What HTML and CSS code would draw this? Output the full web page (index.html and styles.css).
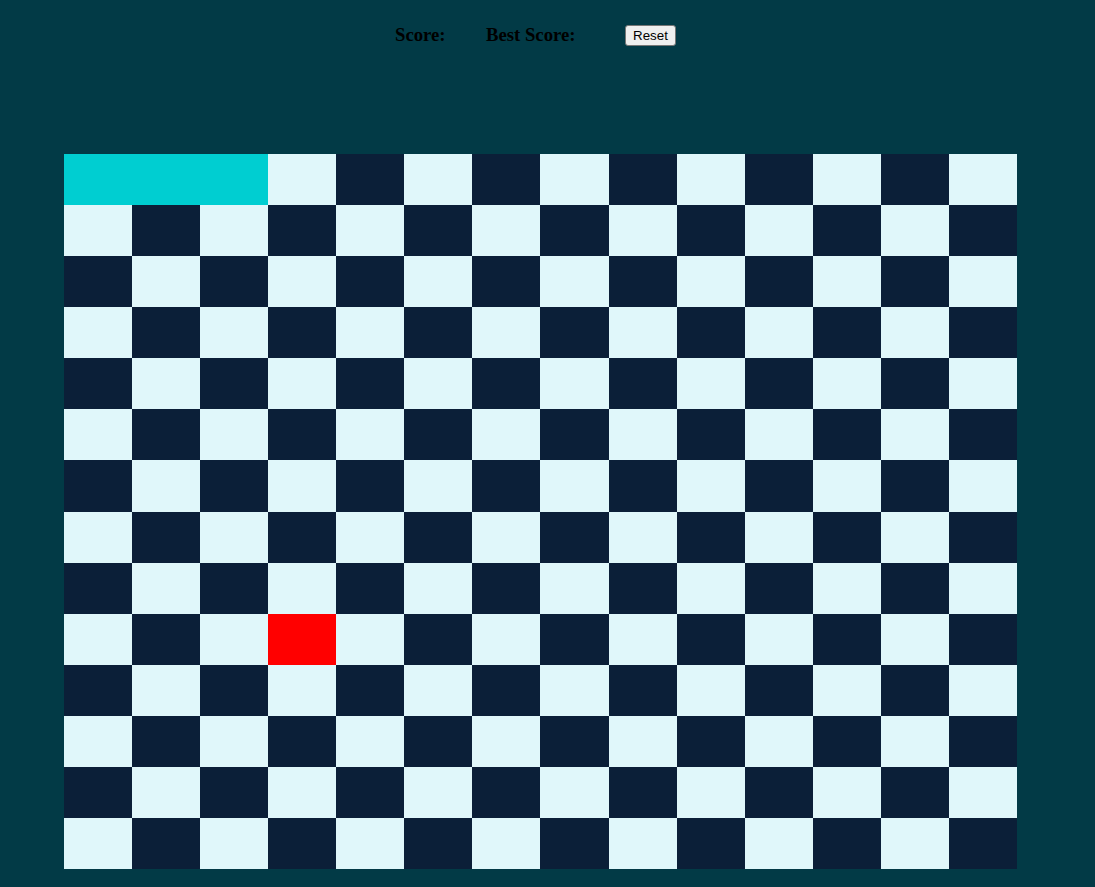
FILE: index.html
```html
<!DOCTYPE html>
<html>
<head>
<meta charset="utf-8">
<title>Snake</title>
<link rel="stylesheet" href="styles.css">
</head>
<body>
<div class="header">
  <div class="stat stat-score">Score: <span class="value"></span></div>
  <div class="stat stat-best">Best Score: <span class="value"></span></div>
  <button class="reset">Reset</button>
</div>
<div class="board">
  <div class="cell s"></div><div class="cell s"></div><div class="cell s"></div><div class="cell l"></div><div class="cell d"></div><div class="cell l"></div><div class="cell d"></div><div class="cell l"></div><div class="cell d"></div><div class="cell l"></div><div class="cell d"></div><div class="cell l"></div><div class="cell d"></div><div class="cell l"></div>
  <div class="cell l"></div><div class="cell d"></div><div class="cell l"></div><div class="cell d"></div><div class="cell l"></div><div class="cell d"></div><div class="cell l"></div><div class="cell d"></div><div class="cell l"></div><div class="cell d"></div><div class="cell l"></div><div class="cell d"></div><div class="cell l"></div><div class="cell d"></div>
  <div class="cell d"></div><div class="cell l"></div><div class="cell d"></div><div class="cell l"></div><div class="cell d"></div><div class="cell l"></div><div class="cell d"></div><div class="cell l"></div><div class="cell d"></div><div class="cell l"></div><div class="cell d"></div><div class="cell l"></div><div class="cell d"></div><div class="cell l"></div>
  <div class="cell l"></div><div class="cell d"></div><div class="cell l"></div><div class="cell d"></div><div class="cell l"></div><div class="cell d"></div><div class="cell l"></div><div class="cell d"></div><div class="cell l"></div><div class="cell d"></div><div class="cell l"></div><div class="cell d"></div><div class="cell l"></div><div class="cell d"></div>
  <div class="cell d"></div><div class="cell l"></div><div class="cell d"></div><div class="cell l"></div><div class="cell d"></div><div class="cell l"></div><div class="cell d"></div><div class="cell l"></div><div class="cell d"></div><div class="cell l"></div><div class="cell d"></div><div class="cell l"></div><div class="cell d"></div><div class="cell l"></div>
  <div class="cell l"></div><div class="cell d"></div><div class="cell l"></div><div class="cell d"></div><div class="cell l"></div><div class="cell d"></div><div class="cell l"></div><div class="cell d"></div><div class="cell l"></div><div class="cell d"></div><div class="cell l"></div><div class="cell d"></div><div class="cell l"></div><div class="cell d"></div>
  <div class="cell d"></div><div class="cell l"></div><div class="cell d"></div><div class="cell l"></div><div class="cell d"></div><div class="cell l"></div><div class="cell d"></div><div class="cell l"></div><div class="cell d"></div><div class="cell l"></div><div class="cell d"></div><div class="cell l"></div><div class="cell d"></div><div class="cell l"></div>
  <div class="cell l"></div><div class="cell d"></div><div class="cell l"></div><div class="cell d"></div><div class="cell l"></div><div class="cell d"></div><div class="cell l"></div><div class="cell d"></div><div class="cell l"></div><div class="cell d"></div><div class="cell l"></div><div class="cell d"></div><div class="cell l"></div><div class="cell d"></div>
  <div class="cell d"></div><div class="cell l"></div><div class="cell d"></div><div class="cell l"></div><div class="cell d"></div><div class="cell l"></div><div class="cell d"></div><div class="cell l"></div><div class="cell d"></div><div class="cell l"></div><div class="cell d"></div><div class="cell l"></div><div class="cell d"></div><div class="cell l"></div>
  <div class="cell l"></div><div class="cell d"></div><div class="cell l"></div><div class="cell f"></div><div class="cell l"></div><div class="cell d"></div><div class="cell l"></div><div class="cell d"></div><div class="cell l"></div><div class="cell d"></div><div class="cell l"></div><div class="cell d"></div><div class="cell l"></div><div class="cell d"></div>
  <div class="cell d"></div><div class="cell l"></div><div class="cell d"></div><div class="cell l"></div><div class="cell d"></div><div class="cell l"></div><div class="cell d"></div><div class="cell l"></div><div class="cell d"></div><div class="cell l"></div><div class="cell d"></div><div class="cell l"></div><div class="cell d"></div><div class="cell l"></div>
  <div class="cell l"></div><div class="cell d"></div><div class="cell l"></div><div class="cell d"></div><div class="cell l"></div><div class="cell d"></div><div class="cell l"></div><div class="cell d"></div><div class="cell l"></div><div class="cell d"></div><div class="cell l"></div><div class="cell d"></div><div class="cell l"></div><div class="cell d"></div>
  <div class="cell d"></div><div class="cell l"></div><div class="cell d"></div><div class="cell l"></div><div class="cell d"></div><div class="cell l"></div><div class="cell d"></div><div class="cell l"></div><div class="cell d"></div><div class="cell l"></div><div class="cell d"></div><div class="cell l"></div><div class="cell d"></div><div class="cell l"></div>
  <div class="cell l"></div><div class="cell d"></div><div class="cell l"></div><div class="cell d"></div><div class="cell l"></div><div class="cell d"></div><div class="cell l"></div><div class="cell d"></div><div class="cell l"></div><div class="cell d"></div><div class="cell l"></div><div class="cell d"></div><div class="cell l"></div><div class="cell d"></div>
</div>
</body>
</html>
```

FILE: styles.css
```css
html, body {
  margin: 0;
  padding: 0;
  background: #023a46;
  height: 100%;
  overflow: hidden;
}

.header {
  display: flex;
  align-items: center;
  height: 22px;
  padding: 24px 0 0 395px;
  font-family: "Liberation Serif", "Times New Roman", serif;
  font-weight: bold;
  font-size: 18.72px;
  color: #000;
}

.stat {
  white-space: nowrap;
}

.stat-score {
  width: 91px;
}

.stat-best {
  width: 139px;
}

.reset {
  font-family: "Liberation Sans", Arial, sans-serif;
  font-size: 13.33px;
  font-weight: normal;
  width: 51px;
  height: 21px;
  padding: 0;
  margin: 0;
  color: #000;
  background: #efefef;
  border: 1px solid #767676;
  border-radius: 3px;
}

.board {
  display: grid;
  grid-template-columns: repeat(14, 1fr);
  grid-template-rows: repeat(14, 1fr);
  width: 953px;
  height: 715px;
  margin: 108px 0 0 64px;
}

.cell.d { background: #0b1f38; }
.cell.l { background: #e0f7fa; }
.cell.s { background: #00ced1; }
.cell.f { background: #ff0000; }
```
